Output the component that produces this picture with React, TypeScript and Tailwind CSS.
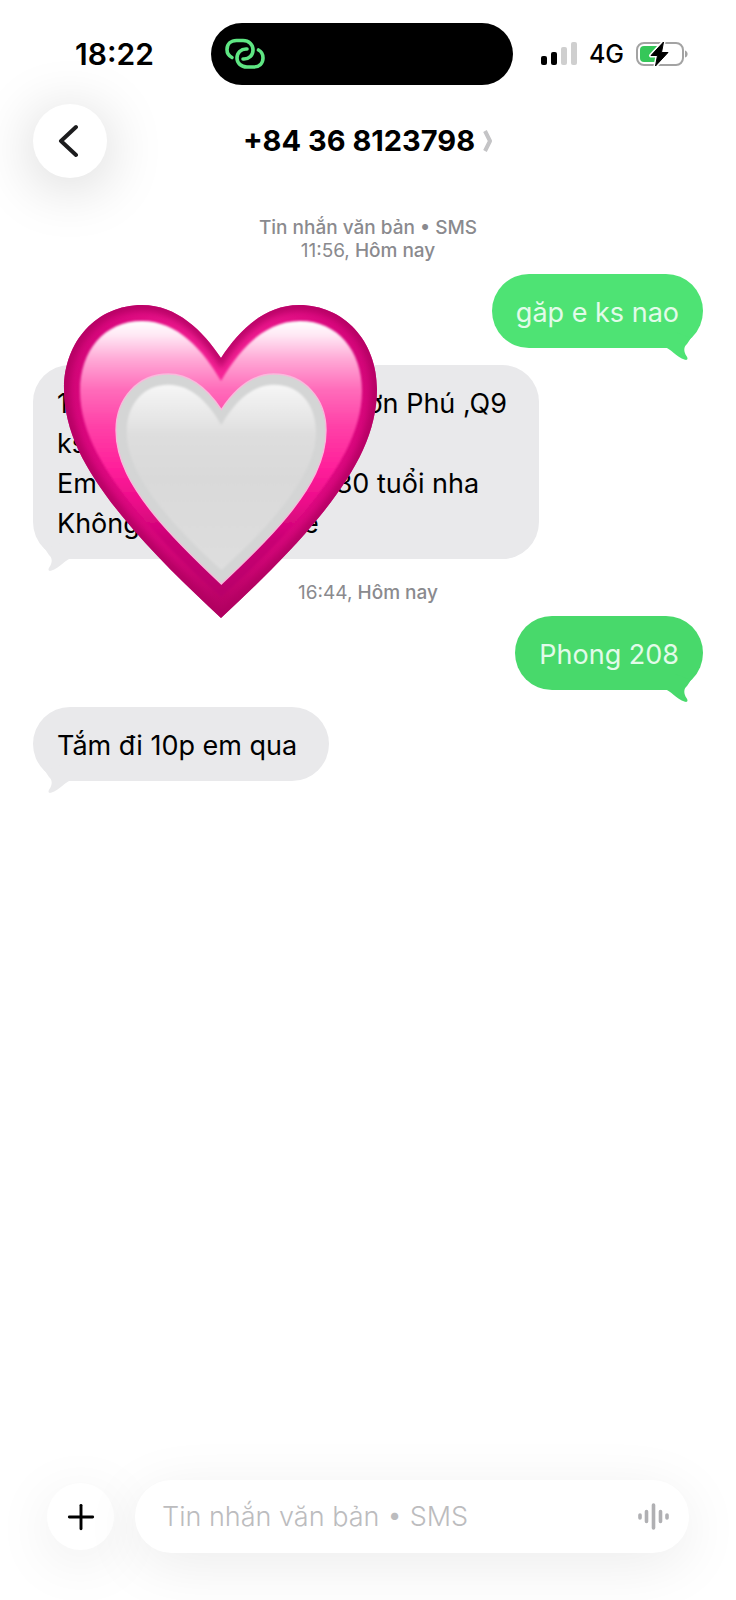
import { Plus } from 'lucide-react';
import type { ReactNode } from 'react';

interface Message {
  from: 'me' | 'them';
  lines: string[];
  bg: string;
  tail: string;
}

const OUTER_HEART =
  'M157 53 C139 26 113 0 78 0 C33 0 0 36 0 84 C0 128 23 168 58 211 C88 248 123 281 157 313 C191 281 226 248 256 211 C291 168 313 128 313 84 C313 36 280 0 235 0 C200 0 175 26 157 53 Z';

const INNER_HEART =
  'M157 76 C139 45 114 16 78 16 C40 16 16 46 16 86 C16 128 42 168 72 205 C98 237 128 266 157 292 C186 266 216 237 242 205 C272 168 298 128 298 86 C298 46 274 16 236 16 C200 16 175 45 157 76 Z';

function HeartSticker() {
  return (
    <svg viewBox="0 0 313 313" className="h-full w-full overflow-visible" aria-hidden="true">
      <defs>
        <radialGradient id="rim" gradientUnits="userSpaceOnUse" cx="157" cy="100" r="213">
          <stop offset="0" stopColor="#fb2a9c" />
          <stop offset="0.35" stopColor="#ee1a8f" />
          <stop offset="0.65" stopColor="#d9067d" />
          <stop offset="1" stopColor="#b0005f" />
        </radialGradient>
        <linearGradient id="pink" gradientUnits="userSpaceOnUse" x1="0" y1="16" x2="0" y2="290">
          <stop offset="0" stopColor="#ffffff" />
          <stop offset="0.05" stopColor="#ffe9f5" />
          <stop offset="0.14" stopColor="#ffa9d6" />
          <stop offset="0.25" stopColor="#ff6cba" />
          <stop offset="0.38" stopColor="#ff42a8" />
          <stop offset="0.54" stopColor="#ff1f9a" />
          <stop offset="0.66" stopColor="#ec0c8a" />
          <stop offset="0.8" stopColor="#c90274" />
          <stop offset="1" stopColor="#b8006a" />
        </linearGradient>
        <linearGradient id="gray" gradientUnits="userSpaceOnUse" x1="0" y1="20" x2="0" y2="290">
          <stop offset="0" stopColor="#f5f5f5" />
          <stop offset="0.1" stopColor="#ececec" />
          <stop offset="0.26" stopColor="#dedede" />
          <stop offset="0.5" stopColor="#d9d9d9" />
          <stop offset="1" stopColor="#dedede" />
        </linearGradient>
        <filter id="soft" x="-5%" y="-5%" width="110%" height="110%">
          <feGaussianBlur stdDeviation="1.2" />
        </filter>
        <filter id="softer" x="-5%" y="-5%" width="110%" height="110%">
          <feGaussianBlur stdDeviation="3" />
        </filter>
        <clipPath id="edge">
          <path d={OUTER_HEART} />
        </clipPath>
      </defs>

      <path d={OUTER_HEART} fill="url(#rim)" />
      <g clipPath="url(#edge)">
        <path d={OUTER_HEART} fill="none" stroke="#b00060" strokeOpacity="0.8" strokeWidth="12" filter="url(#softer)" />
      </g>
      <path d={INNER_HEART} fill="url(#pink)" filter="url(#soft)" />

      {/* inner heart */}
      <g transform="translate(52 69) scale(0.671)">
        <path d={OUTER_HEART} fill="#d4d5d5" stroke="#f9b9dc" strokeWidth="2" />
        <path d={INNER_HEART} fill="url(#gray)" filter="url(#soft)" />
      </g>
    </svg>
  );
}

function LinkIcon() {
  return (
    <svg viewBox="0 0 40 32" className="h-8 w-10" fill="none" stroke="#5fe683" strokeWidth="3.6" strokeLinecap="round" aria-hidden="true">
      <path d="M7 19.500C4 18 2 15 2 11.500C2 6 6 2.500 11.500 2.500H18C24 2.500 28 6.500 28 12C28 17.500 24 21 19 21H18" />
      <path d="M33.500 12C36.500 13.500 38 16.500 38 20C38 25.500 34 29 28.500 29H22C16 29 12 25 12 20C12 14.500 16 11 21 11H22" />
    </svg>
  );
}

function SignalIcon() {
  return (
    <svg viewBox="0 0 36 24" className="h-6 w-9" aria-hidden="true">
      <rect x="0" y="14" width="6" height="9" rx="2" />
      <rect x="10" y="10" width="6" height="13" rx="2" />
      <rect x="20" y="5" width="6" height="18" rx="2" fill="#cfcfcf" />
      <rect x="30" y="0" width="6" height="23" rx="2" fill="#cfcfcf" />
    </svg>
  );
}

function BatteryIcon() {
  return (
    <svg viewBox="0 0 52 26" className="h-[26px] w-[52px]" aria-hidden="true">
      <rect x="1" y="2" width="46" height="22" rx="7" fill="none" stroke="#a3a3a3" strokeWidth="2" />
      <path d="M49 9.500C52.500 10.500 52.500 15.500 49 16.500Z" fill="#a3a3a3" />
      <path d="M8 5H22V21H8Q4 21 4 17V9Q4 5 8 5Z" fill="#35c759" />
      <path d="M27.500 1L15 14.500H21.500L19.500 25L32 11.500H25.500Z" stroke="#fff" strokeWidth="4" strokeLinejoin="round" />
      <path d="M27.500 1L15 14.500H21.500L19.500 25L32 11.500H25.500Z" stroke="#000" strokeWidth="1" strokeLinejoin="round" />
    </svg>
  );
}

function Bubble({ message, children }: { message: Message; children?: ReactNode }) {
  return (
    <div className={`flex ${message.from === 'me' ? 'justify-end' : 'justify-start'}`}>
      <div className={`relative rounded-[37px] pt-[19px] pb-[15px] pl-6 text-[27px] leading-10 ${message.bg}`}>
        {message.lines.map((line) => (
          <p key={line}>{line}</p>
        ))}
        <svg
          viewBox="0 0 38 28"
          className={`absolute -bottom-3 h-7 w-[38px] ${message.tail}`}
          fill="currentColor"
          aria-hidden="true"
        >
          <path d="M0 15.500C5 16 11 25 20 27.800C23 28.500 23 26 21.500 24C18.500 19.500 18.500 15 22 12L26 6L10 0H0Z" />
        </svg>
        {children}
      </div>
    </div>
  );
}

function Timestamp({ time }: { time: string }) {
  return (
    <p>
      <span className="font-normal">{time},</span> Hôm nay
    </p>
  );
}

const THEIRS = {
  from: 'them',
  bg: 'pr-8 bg-[#e9e9eb] text-black',
  tail: 'left-0 -scale-x-100 text-[#e9e9eb]',
} as const;

const MESSAGES: Record<'ask' | 'address' | 'room' | 'reply', Message> = {
  ask: {
    from: 'me',
    lines: ['găp e ks nao'],
    bg: 'pr-6 bg-[#4ee374] text-[#e2fbe9]',
    tail: 'right-0 text-[#4ee374]',
  },
  address: {
    ...THEIRS,
    lines: ['14 đường số 8, Trường Sơn Phú ,Q9', 'ks', 'Em tiếp khách từ trên 30 tuổi nha', 'Không nhận khách e'],
  },
  room: {
    from: 'me',
    lines: ['Phong 208'],
    bg: 'pr-6 bg-[#48d96b] text-[#e2fbe9]',
    tail: 'right-0 text-[#48d96b]',
  },
  reply: { ...THEIRS, lines: ['Tắm đi 10p em qua'] },
};

export default function App() {
  return (
    <div className="flex min-h-screen flex-col overflow-hidden bg-white font-['Inter','Noto_Sans',sans-serif] text-black">
      <header>
        {/* status bar */}
        <div className="grid grid-cols-[1fr_302px_1fr] items-center pt-[23px] pr-3">
          <span className="pl-[75px] text-[30px] leading-9 font-semibold">18:22</span>
          <div className="flex h-[62px] items-center rounded-full bg-black px-3.5">
            <LinkIcon />
          </div>
          <div className="flex items-center justify-end gap-3 pr-9">
            <SignalIcon />
            <span className="text-[25px] leading-8 font-medium">4G</span>
            <BatteryIcon />
          </div>
        </div>

        <div className="mt-[19px] grid grid-cols-[74px_1fr_74px] items-center px-[33px]">
          <button
            type="button"
            aria-label="Quay lại"
            className="flex h-[74px] w-[74px] items-center justify-center rounded-full bg-white shadow-[0_8px_60px_rgba(0,0,0,0.18)]"
          >
            <svg viewBox="0 0 20 34" className="mr-1 h-[34px] w-5" fill="none" stroke="#1c1c1e" strokeWidth="4" strokeLinecap="round" strokeLinejoin="round" aria-hidden="true">
              <path d="M18 3L3 17L18 31" />
            </svg>
          </button>
          <h1 className="flex items-center justify-center gap-2 text-[29px] leading-9 font-bold">
            +84 36 8123798
            <svg viewBox="0 0 10 22" className="h-[22px] w-[10px]" fill="none" stroke="#c4c4c6" strokeWidth="4" strokeLinejoin="round" aria-hidden="true">
              <path d="M2 1L7 11L2 21" />
            </svg>
          </h1>
        </div>
      </header>

      <main className="flex-1 px-[33px]">
        <div className="mt-[38px] mb-3 text-center text-[19px] leading-[23px] font-medium text-[#8a8a8e]">
          <p>Tin nhắn văn bản • SMS</p>
          <Timestamp time="11:56" />
        </div>

        <div className="flex flex-col gap-[17px]">
          <Bubble message={MESSAGES.ask} />
          <Bubble message={MESSAGES.address}>
            <div className="absolute -top-[60px] left-[31px] h-[313px] w-[313px]">
              <HeartSticker />
            </div>
          </Bubble>
        </div>

        <div className="pt-[22px] pb-3 text-center text-[19px] leading-[23px] font-medium text-[#8a8a8e]">
          <Timestamp time="16:44" />
        </div>

        <div className="flex flex-col gap-[17px]">
          <Bubble message={MESSAGES.room} />
          <Bubble message={MESSAGES.reply} />
        </div>
      </main>

      <footer className="flex items-center gap-[21px] px-[47px] pb-[47px]">
        <button
          type="button"
          aria-label="Thêm"
          className="flex h-[67px] w-[67px] shrink-0 items-center justify-center rounded-full bg-white shadow-[0_12px_60px_rgba(0,0,0,0.08)]"
        >
          <Plus className="h-10 w-10" strokeWidth={1.75} />
        </button>
        <label className="flex h-[73px] flex-1 items-center rounded-full bg-white pr-5 pl-[27px] shadow-[0_12px_60px_rgba(0,0,0,0.08)]">
          <input
            type="text"
            aria-label="Tin nhắn"
            placeholder="Tin nhắn văn bản • SMS"
            className="min-w-0 flex-1 bg-transparent text-[27px] leading-10 font-light outline-none placeholder:text-[#bcbcbe]"
          />
          <svg viewBox="0 0 31 27" className="h-[27px] w-[31px]" stroke="#b0b0b3" strokeWidth="3.6" strokeLinecap="round" aria-hidden="true">
            <path d="M2 12V15M8.500 8.500V18.500M15.500 2V25M22.500 8.500V18.500M29 12V15" />
          </svg>
        </label>
      </footer>
    </div>
  );
}
